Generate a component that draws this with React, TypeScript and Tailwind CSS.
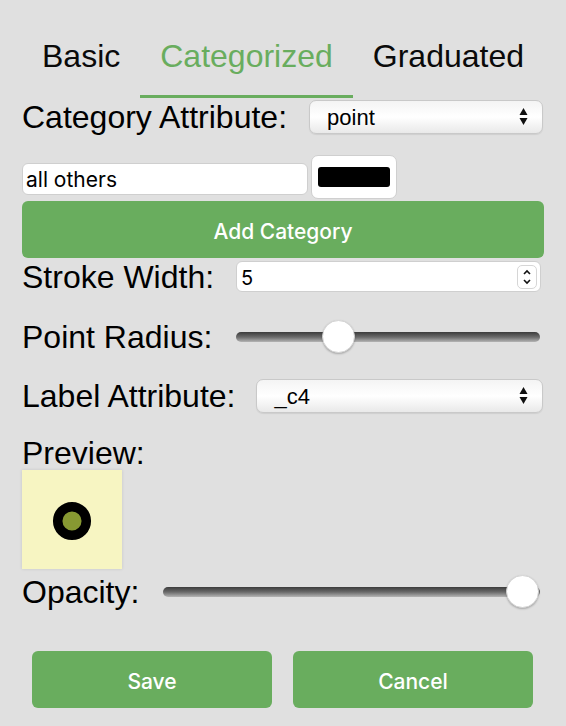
import React from "react";

const green = "bg-[#69ad5e]";

function SelectBox({ value, className }: { value: string; className: string }) {
  return (
    <div
      className={`flex items-center justify-between rounded-[7px] border border-[#c9c9c9] bg-linear-to-b from-[#f4f4f4] via-white to-[#e9e9e9] pl-[17px] pr-[14px] shadow-[0_1px_1px_rgba(0,0,0,0.08)] ${className}`}
    >
      <span className="pt-[2px] text-[22px] leading-none text-black">{value}</span>
      <svg width="9" height="19" viewBox="0 0 9 19">
        <path d="M4.5 1 L8.5 8 L0.5 8 Z" fill="#111" />
        <path d="M4.5 18 L8.5 11 L0.5 11 Z" fill="#111" />
      </svg>
    </div>
  );
}

function Slider({ pos }: { pos: number }) {
  return (
    <div className="relative flex h-[34px] flex-1 items-center">
      <div className="h-[10px] w-full rounded-full bg-linear-to-b from-[#3c3c3c] via-[#6a6a6a] to-[#b5b5b5]" />
      <div
        className="absolute top-[0px] h-[33px] w-[33px] rounded-full border border-[#d4d4d4] bg-white shadow-[0_1px_2px_rgba(0,0,0,0.25)]"
        style={{ left: `calc(${pos}% - 16px)` }}
      />
    </div>
  );
}

export default function App() {
  const tabs = ["Basic", "Categorized", "Graduated"];

  return (
    <div
      className="min-h-screen w-full bg-[#e0e0e0] px-[22px] pt-[38px] text-black"
      style={{ fontFamily: '"Liberation Sans", Arial, sans-serif' }}
    >
      {/* tabs */}
      <div className="flex">
        {tabs.map((t) => (
          <div
            key={t}
            className={`border-b-[3px] px-[20px] pb-[20px] text-[32px] leading-[37px] ${
              t === "Categorized"
                ? "border-[#69ad5e] text-[#69ad5e]"
                : "border-transparent text-[#0a0a0a]"
            }`}
          >
            {t}
          </div>
        ))}
      </div>

      <div className="flex h-[37px] items-center text-[32px] leading-[37px]">
        <span className="pt-[2px]">Category Attribute:</span>
        <SelectBox value="point" className="ml-[22px] mr-[1px] h-[34px] flex-1" />
      </div>

      <div className="mt-[20px] flex h-[44px] items-center">
        <div className="mt-[3px] flex h-[32px] w-[286px] items-center rounded-[6px] border border-[#cfcfcf] bg-white pl-[3px] pt-[3px] font-['Inter'] text-[21px]">
          all others
        </div>
        <div className="ml-[3px] flex h-[44px] w-[86px] items-center justify-center rounded-[7px] border border-[#cfcfcf] bg-white">
          <div className="h-[20px] w-[72px] rounded-[3px] bg-black" />
        </div>
      </div>

      <button
        className={`mt-[2px] flex h-[57px] w-full items-center justify-center rounded-[6px] ${green} pt-[5px] font-['Inter'] text-[21px] font-medium text-white`}
      >
        Add Category
      </button>

      <div className="flex h-[37px] items-center text-[32px] leading-[37px]">
        <span className="pt-[2px]">Stroke Width:</span>
        <div className="ml-[22px] mr-[3px] flex h-[31px] flex-1 items-center justify-between rounded-[6px] border border-[#cfcfcf] bg-white pl-[4px] pr-[3px]">
          <span className="pt-[2px] font-['Inter'] text-[20px] leading-none">5</span>
          <div className="flex h-[24px] w-[20px] flex-col items-center justify-center rounded-[5px] border border-[#d6d6d6]">
            <svg width="10" height="20" viewBox="0 0 10 20">
              <path d="M2 7 L5 4 L8 7" stroke="#111" strokeWidth="1.6" fill="none" />
              <path d="M2 13 L5 16 L8 13" stroke="#111" strokeWidth="1.6" fill="none" />
            </svg>
          </div>
        </div>
      </div>

      <div className="mt-[23px] flex h-[37px] items-center text-[32px] leading-[37px]">
        <span className="pt-[2px]">Point Radius:</span>
        <div className="ml-[24px] mr-[4px] flex flex-1">
          <Slider pos={33.5} />
        </div>
      </div>

      <div className="mt-[22px] flex h-[37px] items-center text-[32px] leading-[37px]">
        <span className="pt-[2px]">Label Attribute:</span>
        <SelectBox value="_c4" className="ml-[21px] mr-[1px] h-[34px] flex-1" />
      </div>

      <div className="mt-[19px] h-[37px] pt-[2px] text-[32px] leading-[37px]">Preview:</div>

      <div className="h-[99px] w-[100px] bg-[#f7f5c2] shadow-[0_0_3px_rgba(0,0,0,0.12)]">
        <svg width="100" height="99" viewBox="0 0 100 99">
          <circle cx="50" cy="51" r="14.3" fill="#879932" stroke="#000" strokeWidth="9.5" />
        </svg>
      </div>

      <div className="mt-[4px] flex h-[37px] items-center text-[32px] leading-[37px]">
        <span className="pt-[2px]">Opacity:</span>
        <div className="ml-[24px] mr-[4px] flex flex-1">
          <Slider pos={95.2} />
        </div>
      </div>

      <div className="mt-[41px] flex pl-[10px]">
        <button
          className={`flex h-[57px] w-[240px] items-center justify-center rounded-[6px] ${green} pt-[5px] font-['Inter'] text-[21px] font-medium text-white`}
        >
          Save
        </button>
        <button
          className={`ml-[21px] flex h-[57px] w-[240px] items-center justify-center rounded-[6px] ${green} pt-[5px] font-['Inter'] text-[21px] font-medium text-white`}
        >
          Cancel
        </button>
      </div>
    </div>
  );
}
